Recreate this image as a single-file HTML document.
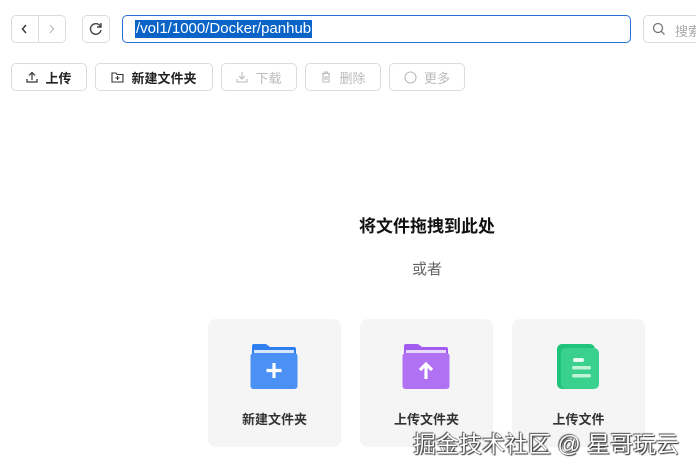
<!DOCTYPE html><html><head><meta charset="utf-8"><style>
*{box-sizing:border-box;margin:0;padding:0}
body{width:696px;height:469px;background:#fff;font-family:"Liberation Sans","Noto Sans CJK SC",sans-serif;position:relative;overflow:hidden;color:#222}
.b{position:absolute;border:1px solid #dcdcdc;border-radius:5px;background:#fff}
.tb{position:absolute;top:63px;height:28px;border:1px solid #dcdcdc;border-radius:5px;font-size:13px;font-weight:bold;display:flex;align-items:center;justify-content:center;gap:7px}
.dis{color:#bbb;font-weight:normal}
.card{position:absolute;top:319px;width:133px;height:128px;background:#f5f5f5;border-radius:8px;text-align:center}
.card .l{position:absolute;top:90px;width:100%;font-size:13px;font-weight:bold;color:#333}
.card svg{position:absolute;left:42px;top:24px}
</style></head><body>
<div class="b" style="left:11px;top:15px;width:55px;height:28px"></div>
<div style="position:absolute;left:38px;top:16px;width:1px;height:26px;background:#dcdcdc"></div>
<svg style="position:absolute;left:19px;top:23px" width="12" height="12"><path d="M7 2 L3.5 6 L7 10" stroke="#333" fill="none" stroke-width="1.4"/></svg>
<svg style="position:absolute;left:46px;top:23px" width="12" height="12"><path d="M4 2 L7.5 6 L4 10" stroke="#bbb" fill="none" stroke-width="1.2"/></svg>
<div class="b" style="left:82px;top:15px;width:28px;height:28px"></div>
<svg style="position:absolute;left:88px;top:21px" width="16" height="16"><path d="M12.5 5.5 A5.3 5.3 0 1 0 13 9" stroke="#444" fill="none" stroke-width="1.4"/><path d="M13 2 V6 H9" stroke="#444" fill="none" stroke-width="1.4"/></svg>
<div class="b" style="left:122px;top:15px;width:509px;height:28px;border-color:#2a6fd6"></div>
<div style="position:absolute;left:135px;top:20px;height:18px;background:#0a64c8;color:#fff;font-size:15px;line-height:18px;padding:0 1px">/vol1/1000/Docker/panhub</div>
<div class="b" style="left:643px;top:15px;width:70px;height:28px"></div>
<svg style="position:absolute;left:652px;top:22px" width="14" height="14"><circle cx="6" cy="6" r="4.5" stroke="#777" fill="none" stroke-width="1.3"/><path d="M9.3 9.3 L12.5 12.5" stroke="#777" stroke-width="1.3"/></svg>
<div style="position:absolute;left:675px;top:21px;font-size:13px;color:#aaa;white-space:nowrap">搜索</div>
<div class="tb" style="left:11px;width:76px"><svg width="12" height="12"><path d="M6 9V1.5M3 4.5L6 1.5L9 4.5M1 8V11H11V8" stroke="#333" fill="none" stroke-width="1.2"/></svg>上传</div>
<div class="tb" style="left:95px;width:118px"><svg width="13" height="12"><path d="M1 2H5L6 3.5H12V11H1Z" stroke="#333" fill="none" stroke-width="1.1"/><path d="M6.5 5V9M4.5 7H8.5" stroke="#333" stroke-width="1.1"/></svg>新建文件夹</div>
<div class="tb dis" style="left:221px;width:76px"><svg width="12" height="12"><path d="M6 1V8M3 5L6 8L9 5M1 8V11H11V8" stroke="#bbb" fill="none" stroke-width="1.1"/></svg>下载</div>
<div class="tb dis" style="left:305px;width:76px"><svg width="12" height="12"><path d="M2 2.5H10M4.5 2.5V1H7.5V2.5M3 3V11H9V3M5 5V9M7 5V9" stroke="#bbb" fill="none" stroke-width="1.1"/></svg>删除</div>
<div class="tb dis" style="left:389px;width:76px"><svg width="13" height="13"><circle cx="6.5" cy="6.5" r="5.5" stroke="#bbb" fill="none" stroke-width="1.1"/></svg>更多</div>
<div style="position:absolute;left:0;width:854px;top:212px;text-align:center;font-size:17px;font-weight:bold;color:#111">将文件拖拽到此处</div>
<div style="position:absolute;left:0;width:854px;top:258px;text-align:center;font-size:15px;color:#666">或者</div>
<div class="card" style="left:208px"><svg width="48" height="46"><path d="M2 3Q2 1 4 1H16L20 4H44Q46 4 46 6V12H2Z" fill="#2f7ff0"/><rect x="4" y="7" width="40" height="10" fill="#d8e6fb"/><rect x="0.5" y="10" width="47" height="36" rx="3" fill="#4a90f5"/><path d="M24 20V35M16.5 27.5H31.5" stroke="#fff" stroke-width="3.2"/></svg><div class="l">新建文件夹</div></div>
<div class="card" style="left:360px"><svg width="48" height="46"><path d="M2 3Q2 1 4 1H16L20 4H44Q46 4 46 6V12H2Z" fill="#a25cf0"/><rect x="4" y="7" width="40" height="10" fill="#e8d8fb"/><rect x="0.5" y="10" width="47" height="36" rx="3" fill="#b072f2"/><path d="M24 36V21M18 27L24 21L30 27" stroke="#fff" stroke-width="3.2" fill="none"/></svg><div class="l">上传文件夹</div></div>
<div class="card" style="left:512px"><svg width="48" height="46" style="left:45px"><rect x="0" y="1" width="38" height="45" rx="5" fill="#1fc47a"/><rect x="4" y="5" width="38" height="41" rx="5" fill="#3ad08e"/><rect x="16" y="15" width="11" height="4" rx="2" fill="#e6fbef"/><rect x="15" y="23" width="19" height="3.5" rx="1.7" fill="#bff2d6"/><rect x="15" y="31" width="19" height="3.5" rx="1.7" fill="#bff2d6"/></svg><div class="l">上传文件</div></div>
<div style="position:absolute;left:413px;top:425px;font-size:23px;color:#fff;text-shadow:0 0 1px #333,1px 1px 1px #333,-1px -1px 1px #555;white-space:nowrap">掘金技术社区 @ 星哥玩云</div>
</body></html>
